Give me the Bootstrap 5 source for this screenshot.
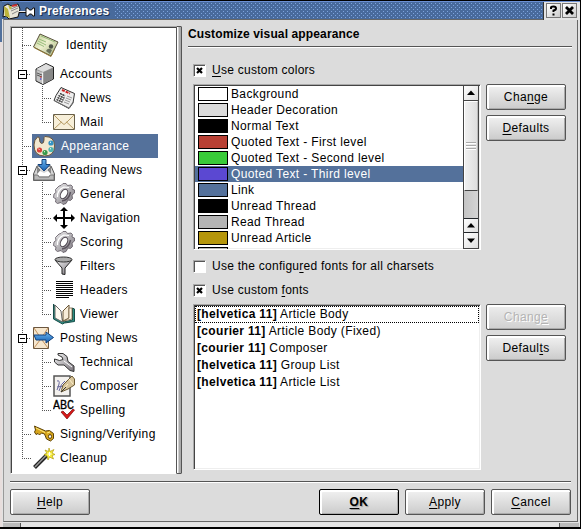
<!DOCTYPE html>
<html lang="en">
<head>
<meta charset="utf-8">
<title>Preferences</title>
<link href="https://cdn.jsdelivr.net/npm/bootstrap@5.3.0/dist/css/bootstrap.min.css" rel="stylesheet">
<style>
  html, body { height: 529px; overflow: hidden; }
  body { font: 12px/16px "Liberation Sans", Arial, sans-serif; color: #000; background: #dcdcdc; letter-spacing: .37px; white-space: nowrap; }
  u { text-underline-offset: 2px; text-decoration-thickness: 1px; }
  svg { flex: none; display: block; }
  .win { width: 581px; height: 529px; border-top: 1px solid #000; border-right: 1px solid #000; border-bottom: 2px solid #000;
    background: linear-gradient(#50709c 0 41px, #e8dedd 41px) 0 0/2px 100% no-repeat, #e2e2e2; }
  .caption { height: 18px; margin-left: 2px; background: #486a9c; border-top: 1px solid #6b90d4; }
  .caption-text { font-weight: 700; color: #fff; text-shadow: 1px 1px 0 #1c3050; letter-spacing: .14px; width: 76px; padding: 1px 0 0 2px; }
  .dots { height: 16px; margin-left: 1px; background:
    radial-gradient(circle at 1.5px 1.5px, #7da3dd 0 .8px, transparent .9px) 0 0/4px 4px,
    radial-gradient(circle at 3.5px 3.5px, #7da3dd 0 .8px, transparent .9px) 0 0/4px 4px, #486a9c; }
  .caption-tools { background: #e4e4e4; border-left: 1px solid #333; width: 37px; height: 18px; padding: 1px 1px 0 2px; gap: 1px; }
  .tool { width: 15px; height: 15px; border: 1px solid #777; background: linear-gradient(135deg,#fff,#ccc); }
  .client { margin-left: 3px; width: 575px; height: 503px; background: #dcdcdc; border: 1px solid #666; border-left-color: #999; padding: 6px 5px 0 6px; }
  .grip { height: 4px; margin: 1px 1px 0 3px; background: linear-gradient(90deg, #bbb 0 17px, #555 17px 18px, #e4e4e4 18px 556px, #555 556px 557px, #bbb 557px); }

  .tree { width: 166px; height: 448px; border: 1px solid #aaa; border-width: 1px 0 1px 1px; border-bottom-color: #fff; }
  .tree-in { border: 1px solid #444; border-width: 1px 0 0 1px; background: #fff; height: 446px; }
  .tree-in > ul { height: 431px; background: repeating-linear-gradient(#555 0 1px, #fff 1px 2px) 10px 0/1px 100% no-repeat; }
  .handle { width: 6px; height: 448px; border: 1px solid #555; background: linear-gradient(90deg,#fff 0 1px,#d0d0d0 1px 2px,#aaa 2px); border-radius: 1px; }
  .node { height: 24px; }
  .node-tall { height: 34px; }
  .kids { background: repeating-linear-gradient(#555 0 1px, #fff 1px 2px) 30px 0/1px calc(100% - 12px) no-repeat; }
  .kids .node { padding-left: 30px; }
  .kids svg { margin: 0 5px 0 2px; }
  .stub { height: 1px; width: 9px; background: repeating-linear-gradient(90deg, #555 0 1px, #fff 1px 2px); }
  .top-stub { margin-left: 10px; }
  .toggle { width: 9px; height: 9px; margin-left: 6px; border: 1px solid #000; background: linear-gradient(#000,#000) center/5px 1px no-repeat #fff; }
  .short { width: 4px; }
  .top-ico { margin: 0 5px 0 2px; }
  .id-ico { margin: 0 7px 0 2px; }
  .picked { width: 126px; height: 24px; background: #54719b; color: #fff; margin-left: 1px; }
  .picked svg { margin-right: 6px; }

  .pane { width: 384px; margin-left: 6px; }
  .heading { font-weight: 700; font-size: 12px; height: 16px; letter-spacing: .13px; }
  .etched { height: 2px; background: #fff; border-top: 1px solid #555; }
  .check { margin-left: 5px; letter-spacing: .26px; }
  .check-first { height: 16px; margin-top: 14px; margin-bottom: 6px; }
  .check-mid { height: 24px; margin-top: 4px; }
  .check-last { height: 24px; margin-bottom: 2px; }
  .box { width: 13px; height: 13px; background: #fff; border: 1px solid; border-color: #aaa #fff #fff #aaa; box-shadow: inset 1px 1px 0 #555; margin-right: 6px; }
  .sunk { width: 288px; height: 166px; margin-left: 5px; background: #fff; border: 1px solid; border-color: #aaa #fff #fff #aaa; box-shadow: inset 1px 1px 0 #444, inset -1px -1px 0 #eee; padding: 1px; overflow: hidden; }
  .side { gap: 5px; margin-left: 5px; }
  .item { height: 16px; padding-left: 3px; }
  .item.on { background: #54719b; color: #fff; }
  .swatch { width: 30px; height: 14px; border: 1px solid #000; margin-right: 3px; }
  .s-head { background: #dcdcdc; } .s-black { background: #000; } .s-one { background: #b94034; } .s-two { background: #39cb39; }
  .s-three { background: #5b48d2; } .s-link { background: #54719b; } .s-read { background: #b4b4b4; } .s-art { background: #b5960c; }
  .vbar { width: 16px; height: 163px; border: 1px solid #444; border-top-width: 0; background: linear-gradient(90deg,#c4c4c4,#d4d4d4); }
  .arrow { height: 15px; background: linear-gradient(135deg,#fff,#ddd); border-bottom: 1px solid #444; }
  .thumb { height: 90px; border: 1px solid #fff; border-right-color: #bbb; border-bottom: 1px solid #444; background: linear-gradient(90deg,#f0f0f0,#dedede); }
  .font-item { height: 17px; padding-left: 2px; line-height: 16px; }
  .font-item b { letter-spacing: .33px; }
  .focus-item { outline: 1px dotted #000; outline-offset: -1px; }
  .push { width: 80px; height: 26px; border: 1px solid #555; border-radius: 2px; padding: 0; font-size: 12px; line-height: 16px; letter-spacing: .37px; color: #000;
    background: linear-gradient(#f2f2f2,#cbcbcb); box-shadow: inset 2px 2px 0 #fff, inset -1px -1px 0 #aaa; }
  .push:disabled { color: #b4b4b4; opacity: 1; border: 1px solid #555; text-shadow: 1px 1px 0 #fff; background: linear-gradient(#eee,#d0d0d0); }
  .push-main { font-weight: 700; border-color: #000; text-shadow: 1px 1px 1px #999; }
  .foot-line { width: 561px; margin-top: 7px; }
  .foot { width: 561px; margin-top: 6px; gap: 6px; }
</style>
</head>
<body>
<svg width="0" height="0" class="position-absolute" aria-hidden="true">
  <defs>
    <linearGradient id="metal" x1="0" y1="0" x2="1" y2="1"><stop offset="0" stop-color="#f4f4f4"/><stop offset="1" stop-color="#77727a"/></linearGradient>
    <linearGradient id="cardg" x1="0" y1="0" x2="1" y2="1"><stop offset="0" stop-color="#b9c98c"/><stop offset=".45" stop-color="#eef0cf"/><stop offset="1" stop-color="#9fae78"/></linearGradient>
    <linearGradient id="blue" x1="0" y1="0" x2="0" y2="1"><stop offset="0" stop-color="#6cb6ee"/><stop offset="1" stop-color="#1560b4"/></linearGradient>
    <symbol id="gear" viewBox="0 0 22 24">
      <path d="M6 4l2-.5L10 1.500h3l1.500 2L18 3l1.500 1.500L19 7l2.500 1v3L19 13l.5 3.500-2 2-2.500-.5-2 3.500-3 1L8 20.500l-3.500 1L2.500 20 3 17 .5 15.500 1 12l2-1.500L2.500 7.500 4 6z" fill="url(#metal)" stroke="#5c545e" stroke-width=".8"/>
      <path d="M4.500 15Q4 8 11 5l5 .5" fill="none" stroke="#fff" stroke-width="1.200"/>
      <path d="M9 19q7-1 8.500-9" fill="none" stroke="#5c545e" stroke-width="1.500"/>
      <ellipse cx="11" cy="12" rx="3.200" ry="5" transform="rotate(30 11 12)" fill="#fff" stroke="#4c444e"/>
    </symbol>
  </defs>
</svg>
<div class="win">
  <div class="caption d-flex">
    <svg width="35" height="17" viewBox="0 0 35 17">
      <path d="M2 4l4-2 3 2 7-2 2 5-2 8-9 2-3-3-3 1z" fill="#e9e6d8" stroke="#111"/>
      <path d="M2 4l4 3 2 9-5-2zM6 3l4 2-2 3z" fill="#bdb43a"/><path d="M9 7l7-3M9 9l7-3M10 12l6-3" stroke="#888"/><path d="M10 4l5-1" stroke="#c33" stroke-width="2"/>
      <path d="M17 10.500h7" stroke="#111"/><path d="M17 9.500h7" stroke="#eee"/><path d="M24 6h2l1.500 2h2L31 6h1.500v8H31l-1.500-2h-2L26 14h-2z" fill="#fff" stroke="#111"/>
    </svg>
    <div class="caption-text">Preferences</div>
    <div class="dots flex-grow-1"></div>
    <div class="caption-tools d-flex">
      <div class="tool"><svg width="13" height="13" viewBox="0 0 13 13"><path d="M4 5V3.500Q4 2.500 6.500 2.500T9 4.500Q9 6 6.500 6.500V8M6.500 9.500v2" fill="none" stroke="#000" stroke-width="2"/></svg></div>
      <div class="tool"><svg width="13" height="13" viewBox="0 0 13 13"><path d="M3 3l7 7M10 3l-7 7" stroke="#000" stroke-width="2.800"/></svg></div>
    </div>
  </div>
  <div class="client">
    <div class="d-flex">
      <div class="tree">
        <div class="tree-in">
          <ul class="list-unstyled m-0">
            <li class="node node-tall d-flex align-items-center"><span class="stub top-stub"></span>
              <svg width="26" height="24" viewBox="0 0 26 24" class="id-ico"><path d="M7 1L25 9 18 23 0.500 14z" fill="url(#cardg)" stroke="#554f38"/><path d="M8 3l14 6M5 8l8 4M4 10l7 3.500M6 6l7 3" stroke="#98bc7c"/><path d="M1 14.500L18 23.500 21 17" fill="none" stroke="#997d3c"/><circle cx="18" cy="13.500" r="2.200" fill="#4c5448"/><path d="M13 18q2-4 6-1l-2 4z" fill="#68705c"/></svg>
              <span>Identity</span></li>
            <li><div class="node d-flex align-items-center"><span class="toggle"></span><span class="stub short"></span>
              <svg class="top-ico" width="22" height="24" viewBox="0 0 22 24"><path d="M3 7L13 1.500 20.500 5v12L10 22.500 3 19z" fill="#999" stroke="#222"/><path d="M3.500 7L13 2l7 3.500L10 10z" fill="#ddd"/><path d="M3.500 8l6 2.500v11L3.500 18.500z" fill="#c4c4c4"/><path d="M4 11l5 2M4 13l5 2" stroke="#555"/><path d="M10 10.500L20 6v11l-10 5z" fill="#888"/><path d="M9.700 10.500v11.500" stroke="#fff"/><path d="M7 15h1.500" stroke="#d22"/><path d="M7 17h1.500" stroke="#22c"/></svg>
              <span>Accounts</span></div>
              <ul class="list-unstyled kids">
                <li class="node d-flex align-items-center"><span class="stub"></span>
                  <svg width="22" height="24" viewBox="0 0 22 24"><path d="M8 1.500L21.500 7.500 20 17l-4 5.500L1 14.500l2-5z" fill="#eee" stroke="#333"/><path d="M9 4l8 3.500" stroke="#c22" stroke-width="2" stroke-dasharray="3 1"/><path d="M7 7.500l5 2.300M5.500 9.500l6 2.700M4.500 11.500l6 2.700M3.500 13.500l6 2.700" stroke="#222" stroke-width="1.300" stroke-dasharray="2 .6"/><path d="M14 10l5 2M13 12l5 2M12 14l5 2M11 16l5 2" stroke="#999"/><path d="M2 15l14 7 4-6" fill="none" stroke="#777"/></svg><span>News</span></li>
                <li class="node d-flex align-items-center"><span class="stub"></span>
                  <svg width="22" height="24" viewBox="0 0 22 24"><path d="M.5 4.500h21v15H.5z" fill="#f7efd9" stroke="#68604a"/><path d="M1 5l8 8M21 5l-8 8M1 19l7.500-7M21 19l-7.500-7M8 12l3 2.500 3-2.500" fill="none" stroke="#b69b64"/></svg><span>Mail</span></li>
              </ul></li>
            <li class="node d-flex align-items-center"><span class="stub top-stub"></span>
              <span class="picked d-flex align-items-center">
                <svg width="23" height="24" viewBox="-1 0 23 24"><path d="M4.500 3Q1 6 1 11 1 22 11.500 22 21.500 22 21.500 12 21.500 2.500 12 2.500 10.500 3 11 6 11 9.500 8.500 9.500 6.500 9 6.500 5 6.500 2.500 4.500 3z" fill="#f2e8d0" stroke="#6b573c"/><circle cx="18" cy="9" r="2.600" fill="#3493c4"/><circle cx="18" cy="15.500" r="2.600" fill="#4db6b0"/><circle cx="12" cy="18.500" r="2.600" fill="#38994a"/><circle cx="6.500" cy="16" r="2.600" fill="#d84038"/><path d="M17 8l1 .5M17 14.500l1 .5M11 17.500l1 .5M5.500 15l1 .5" stroke="#fff"/></svg>
                <span>Appearance</span>
              </span></li>
            <li><div class="node d-flex align-items-center"><span class="toggle"></span><span class="stub short"></span>
              <svg class="top-ico" width="22" height="24" viewBox="0 0 22 24"><path d="M4 8L18 8 21.500 16v6.500H.5V16z" fill="#d5d5d5" stroke="#555"/><path d="M4 9l3 3-3 4M18 9l-3 3 3 4" fill="#888" stroke="#777"/><path d="M4 16L7 13l4 2 4-2 3 3v2H4z" fill="#fff"/><path d="M1 17h4l1 2h10l1-2h4v5H1z" fill="#b9b9b9" stroke="#777"/><path d="M9 1.500h4v5h4l-6 6.500-6-6.500h4z" fill="url(#blue)" stroke="#12407c"/></svg>
              <span>Reading News</span></div>
              <ul class="list-unstyled kids">
                <li class="node d-flex align-items-center"><span class="stub"></span><svg width="22" height="24"><use href="#gear"/></svg><span>General</span></li>
                <li class="node d-flex align-items-center"><span class="stub"></span>
                  <svg width="22" height="24" viewBox="0 0 22 24"><path d="M11 3v18M2 12h18" stroke="#000" stroke-width="2"/><path d="M11 1l4 4H7zM11 23l4-4H7zM0 12l4-4v8zM22 12l-4-4v8z"/></svg><span>Navigation</span></li>
                <li class="node d-flex align-items-center"><span class="stub"></span><svg width="22" height="24"><use href="#gear"/></svg><span>Scoring</span></li>
                <li class="node d-flex align-items-center"><span class="stub"></span>
                  <svg width="22" height="24" viewBox="0 0 22 24"><path d="M2 6l7 8v6l3 .5V14l7-8z" fill="url(#metal)" stroke="#222"/><ellipse cx="10.500" cy="5.500" rx="8.500" ry="2.500" fill="#aaa" stroke="#333"/></svg><span>Filters</span></li>
                <li class="node d-flex align-items-center"><span class="stub"></span>
                  <svg width="22" height="24" viewBox="0 0 22 24" shape-rendering="crispEdges"><path d="M3 3.500h17M3 5.500h17M3 7.500h17M3 9.500h17M3 11.500h17M3 13.500h17M3 15.500h17M3 17.500h17M3 19.500h13" stroke="#000"/></svg><span>Headers</span></li>
                <li class="node d-flex align-items-center"><span class="stub"></span>
                  <svg width="22" height="24" viewBox="0 0 22 24"><path d="M.5 2v15l9 5 2-1 10-1.500V7l-2-1v12l-9 2z" fill="#2b8d80" stroke="#174c48"/><path d="M2 3l6 6 1.500 11L2 16z" fill="#fffaf0" stroke="#666"/><path d="M10 19V9l6-6v13z" fill="#f7ecd8" stroke="#6b5636"/><path d="M16 6l3 0v11l-8 2 5-3z" fill="#fff4e2" stroke="#7b6849" stroke-width=".8"/></svg><span>Viewer</span></li>
              </ul></li>
            <li><div class="node d-flex align-items-center"><span class="toggle"></span><span class="stub short"></span>
              <svg class="top-ico" width="22" height="24" viewBox="0 0 22 24"><path d="M.5 1.500h15v21H.5z" fill="#f6e6cd" stroke="#6b5740"/><path d="M1 2l6 9M15 2l-6 9M1 22l6-8M15 22l-6-8" stroke="#c4935e"/><path d="M1 9h12V6l7.500 5.500L13 17v-3H3z" fill="url(#blue)" stroke="#12407c"/></svg>
              <span>Posting News</span></div>
              <ul class="list-unstyled kids">
                <li class="node d-flex align-items-center"><span class="stub"></span>
                  <svg width="22" height="24" viewBox="0 0 22 24"><path d="M5 3.500h5l4 3 1 5 6 4.500v5.500l-4-1-6-5.500H5L1.500 12V9l5 1.500L10 9.500 9 7 5 5z" fill="url(#metal)" stroke="#333"/><path d="M11 11l8 6" stroke="#fff"/></svg><span>Technical</span></li>
                <li class="node d-flex align-items-center"><span class="stub"></span>
                  <svg width="22" height="24" viewBox="0 0 22 24"><path d="M1 2h16v20H1z" fill="#f3f1ee" stroke="#555" stroke-width="1.500"/><path d="M4 7q3-1 2 3t-2 6M12 7Q8 9 6 17M4 13l7-1" fill="none" stroke="#65659c"/><path d="M8 18l2-7 5-5 4-4 2.500 3v6L15 15z" fill="#d7c49a" stroke="#6b5a34"/><path d="M8 18l7-8M16 5l4 5" stroke="#fff3cc"/><path d="M8 18l5-5" stroke="#333"/></svg><span>Composer</span></li>
                <li class="node d-flex align-items-center"><span class="stub"></span>
                  <svg width="22" height="24" viewBox="0 0 22 24"><text x="0" y="11" font-family="Liberation Mono,monospace" font-size="13" letter-spacing="0" textLength="21" lengthAdjust="spacingAndGlyphs" stroke="#000" stroke-width=".3">ABC</text><path d="M8 14l2-1 4 4 6-6 1.500 1L14 21z" fill="#d81818" stroke="#7c0808" stroke-width=".7"/></svg><span>Spelling</span></li>
              </ul></li>
            <li class="node d-flex align-items-center"><span class="stub top-stub"></span>
              <svg class="top-ico" width="22" height="24" viewBox="0 0 22 24"><path d="M1.500 4l2 1 9 4 4-.5 4 3v5l-3 2.500-4-2-2-5-3-1-2 2-1.500-1.500-2 1L1.500 10l1-2z" fill="#d7a51c" stroke="#5c4208"/><path d="M3 6l9 4.500M14 11l3-1" stroke="#ffec80"/><ellipse cx="17" cy="14.500" rx="1.500" ry="2" fill="#fff" stroke="#5c4208"/></svg>
              <span>Signing/Verifying</span></li>
            <li class="node d-flex align-items-center"><span class="stub top-stub"></span>
              <svg class="top-ico" width="22" height="24" viewBox="0 0 22 24"><path d="M1.500 21.500L14 9" stroke="#222" stroke-width="4"/><path d="M2 21L13.500 9" stroke="#999" stroke-width="1.500"/><path d="M16 2l1 3.500 4-2-2 3.500 3 1.500-3 1 1.500 3.500-4-2L15 14l-1-4-3-1.500 3-1L12 4l3.500 1.500z" fill="#f7ee3c" stroke="#b29c10" stroke-width=".7"/><path d="M16.500 6v4M14.500 8h4" stroke="#fff"/></svg>
              <span>Cleanup</span></li>
          </ul>
        </div>
      </div>
      <div class="handle"></div>
      <div class="pane">
        <div class="heading">Customize visual appearance</div>
        <div class="etched mt-1"></div>
        <div class="d-flex align-items-center check check-first"><span class="box"><svg width="11" height="11" viewBox="0 0 11 11"><path d="M3 3l5 5M8 3l-5 5" stroke="#000" stroke-width="2.200"/></svg></span><span><u>U</u>se custom colors</span></div>
        <div class="d-flex">
          <div class="sunk d-flex">
            <div class="flex-grow-1">
              <div class="item d-flex align-items-center"><span class="swatch"></span>Background</div>
              <div class="item d-flex align-items-center"><span class="swatch s-head"></span>Header Decoration</div>
              <div class="item d-flex align-items-center"><span class="swatch s-black"></span>Normal Text</div>
              <div class="item d-flex align-items-center"><span class="swatch s-one"></span>Quoted Text - First level</div>
              <div class="item d-flex align-items-center"><span class="swatch s-two"></span>Quoted Text - Second level</div>
              <div class="item on d-flex align-items-center"><span class="swatch s-three"></span>Quoted Text - Third level</div>
              <div class="item d-flex align-items-center"><span class="swatch s-link"></span>Link</div>
              <div class="item d-flex align-items-center"><span class="swatch s-black"></span>Unread Thread</div>
              <div class="item d-flex align-items-center"><span class="swatch s-read"></span>Read Thread</div>
              <div class="item d-flex align-items-center"><span class="swatch s-art"></span>Unread Article</div>
              <div class="item d-flex align-items-center"><span class="swatch s-read"></span></div>
            </div>
            <div class="vbar d-flex flex-column">
              <div class="arrow"><svg width="14" height="14" viewBox="0 0 14 14"><path d="M7 4.500l4 4.500H3z"/></svg></div>
              <div class="thumb d-flex flex-column justify-content-center"><svg width="12" height="10" viewBox="0 0 12 10"><path d="M1 1.500h10M1 4.500h10M1 7.500h10" stroke="#aaa"/><path d="M1 2.500h10M1 5.500h10M1 8.500h10" stroke="#fff"/></svg></div>
              <div class="arrow mt-auto border-top border-dark"><svg width="14" height="14" viewBox="0 0 14 14"><path d="M7 4l4 4.500H3z"/></svg></div>
              <div class="arrow border-bottom-0"><svg width="14" height="14" viewBox="0 0 14 14"><path d="M7 10l4-4.500H3z"/></svg></div>
            </div>
          </div>
          <div class="d-flex flex-column side">
            <button class="btn push">Cha<u>n</u>ge</button>
            <button class="btn push"><u>D</u>efaults</button>
          </div>
        </div>
        <div class="d-flex align-items-center check check-mid"><span class="box"></span><span>Use the configu<u>r</u>ed fonts for all charsets</span></div>
        <div class="d-flex align-items-center check check-last"><span class="box"><svg width="11" height="11" viewBox="0 0 11 11"><path d="M3 3l5 5M8 3l-5 5" stroke="#000" stroke-width="2.200"/></svg></span><span>Use custom <u>f</u>onts</span></div>
        <div class="d-flex">
          <div class="sunk">
            <div class="font-item focus-item"><b>[helvetica 11]</b> Article Body</div>
            <div class="font-item"><b>[courier 11]</b> Article Body (Fixed)</div>
            <div class="font-item"><b>[courier 11]</b> Composer</div>
            <div class="font-item"><b>[helvetica 11]</b> Group List</div>
            <div class="font-item"><b>[helvetica 11]</b> Article List</div>
          </div>
          <div class="d-flex flex-column side">
            <button class="btn push" disabled>Chang<u>e</u></button>
            <button class="btn push">Defaul<u>t</u>s</button>
          </div>
        </div>
      </div>
    </div>
    <div class="etched foot-line"></div>
    <div class="d-flex foot">
      <button class="btn push me-auto"><u>H</u>elp</button>
      <button class="btn push push-main"><u>O</u>K</button>
      <button class="btn push"><u>A</u>pply</button>
      <button class="btn push"><u>C</u>ancel</button>
    </div>
  </div>
  <div class="grip"></div>
</div>
<script src="https://cdn.jsdelivr.net/npm/bootstrap@5.3.0/dist/js/bootstrap.bundle.min.js"></script>
</body>
</html>
